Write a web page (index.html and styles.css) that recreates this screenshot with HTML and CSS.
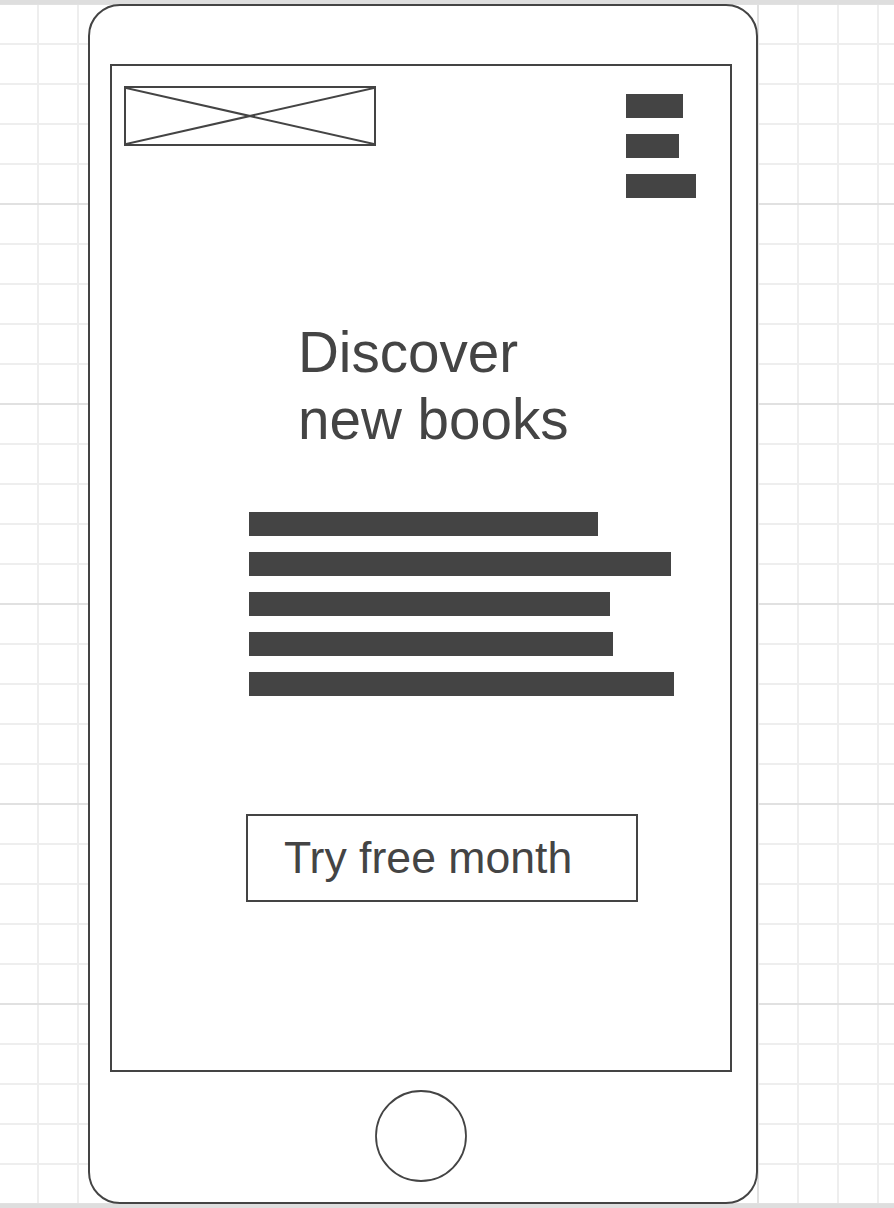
FILE: index.html
```html
<!DOCTYPE html>
<html lang="en">
<head>
<meta charset="utf-8">
<title>Discover new books – mobile wireframe</title>
<link rel="stylesheet" href="styles.css">
</head>
<body>
<div class="canvas">
  <div class="phone">
    <div class="screen">
      <header class="header">
        <div class="logo">
          <svg class="logo-x" viewBox="0 0 100 100" preserveAspectRatio="none">
            <line x1="0" y1="0" x2="100" y2="100" vector-effect="non-scaling-stroke"/>
            <line x1="0" y1="100" x2="100" y2="0" vector-effect="non-scaling-stroke"/>
          </svg>
        </div>
        <div class="menu">
          <span class="menu-bar menu-bar-1"></span>
          <span class="menu-bar menu-bar-2"></span>
          <span class="menu-bar menu-bar-3"></span>
        </div>
      </header>
      <h1 class="title">Discover<br>new books</h1>
      <div class="lines">
        <span class="line" style="width:349px"></span>
        <span class="line" style="width:422px"></span>
        <span class="line" style="width:361px"></span>
        <span class="line" style="width:364px"></span>
        <span class="line" style="width:425px"></span>
      </div>
      <div class="cta">Try free month</div>
    </div>
    <svg class="home" width="92" height="92" viewBox="0 0 92 92">
      <circle cx="46" cy="46" r="45"/>
    </svg>
  </div>
</div>
</body>
</html>
```
FILE: styles.css
```css
html, body {
  margin: 0;
  padding: 0;
  background: #ffffff;
}

.canvas {
  width: 894px;
  height: 1200px;
  border-top: 4px solid #dedede;
  border-bottom: 4px solid #dedede;
  background-color: #ffffff;
  background-image:
    linear-gradient(to bottom, #e1e1e1 2px, transparent 2px),
    linear-gradient(to right, #e1e1e1 2px, transparent 2px),
    linear-gradient(to bottom, #eeeeee 2px, transparent 2px),
    linear-gradient(to right, #eeeeee 2px, transparent 2px);
  background-size: 894px 200px, 200px 1200px, 894px 40px, 40px 1200px;
  background-position: 0 199px, 157px 0, 0 39px, 37px 0;
  font-family: "Liberation Sans", Arial, sans-serif;
  color: #444444;
  overflow: hidden;
}

.phone {
  box-sizing: border-box;
  width: 670px;
  height: 1200px;
  margin-left: 88px;
  border: 2px solid #444444;
  border-radius: 32px;
  background: #ffffff;
  display: flex;
  flex-direction: column;
}

.screen {
  box-sizing: border-box;
  width: 622px;
  height: 1008px;
  margin: 58px 0 0 20px;
  border: 2px solid #444444;
  display: flex;
  flex-direction: column;
  align-items: flex-start;
}

.header {
  display: flex;
  align-items: flex-start;
  margin-top: 20px;
  margin-left: 12px;
}

.logo {
  box-sizing: border-box;
  width: 252px;
  height: 60px;
  border: 2px solid #444444;
}

.logo-x {
  display: block;
  width: 100%;
  height: 100%;
}

.logo-x line {
  stroke: #444444;
  stroke-width: 2;
}

.menu {
  display: flex;
  flex-direction: column;
  gap: 16px;
  margin-left: 250px;
  margin-top: 8px;
}

.menu-bar {
  display: block;
  height: 24px;
  background: #444444;
}

.menu-bar-1 { width: 57px; }
.menu-bar-2 { width: 53px; }
.menu-bar-3 { width: 70px; }

.title {
  margin: 121px 0 0 186px;
  font-size: 56.6px;
  line-height: 67px;
  font-weight: normal;
  color: #444444;
}

.lines {
  display: flex;
  flex-direction: column;
  gap: 16px;
  margin: 59px 0 0 137px;
}

.line {
  display: block;
  height: 24px;
  background: #444444;
}

.cta {
  box-sizing: border-box;
  width: 392px;
  height: 88px;
  margin: 118px 0 0 134px;
  padding-left: 36px;
  border: 2px solid #444444;
  display: flex;
  align-items: center;
  font-size: 44.6px;
  color: #444444;
}

.home {
  display: block;
  margin: 18px 0 0 285px;
}

.home circle {
  fill: #ffffff;
  stroke: #444444;
  stroke-width: 1.8;
}
```
